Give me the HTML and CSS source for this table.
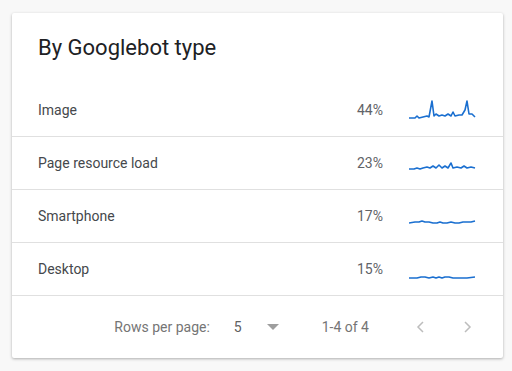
FILE: index.html
```html
<html>

<head>
    <link rel="stylesheet" href="styles.css">
</head>

<body>
    <div class="card">
        <h2 class="title">By Googlebot type</h2>
        <div class="row">
            <span class="label">Image</span>
            <span class="pct">44%</span>
            <svg class="spark" width="68" height="24" viewBox="0 0 68 24">
                <polyline points="0,20 6,20 8,18 10,20 14,19 18,18 20,19 23,3 25,18 27,16 30,18 33,17 36,18 39,16 42,18 44,14 46,18 50,17 53,17 56,12 58,3 60,16 63,16 66,19" />
            </svg>
        </div>
        <div class="row">
            <span class="label">Page resource load</span>
            <span class="pct">23%</span>
            <svg class="spark" width="68" height="24" viewBox="0 0 68 24">
                <polyline points="0,18 5,18 8,17 11,18 14,17 18,16 21,17 24,15 27,17 30,14 33,17 36,15 39,17 42,12 44,17 48,16 52,17 55,15 58,17 62,16 66,17" />
            </svg>
        </div>
        <div class="row">
            <span class="label">Smartphone</span>
            <span class="pct">17%</span>
            <svg class="spark" width="68" height="24" viewBox="0 0 68 24">
                <polyline points="0,19 6,18 10,18 13,17 16,18 20,18 24,19 28,19 31,18 34,19 38,19 42,18 46,19 50,19 54,18 58,18 62,18 66,17" />
            </svg>
        </div>
        <div class="row">
            <span class="label">Desktop</span>
            <span class="pct">15%</span>
            <svg class="spark" width="68" height="24" viewBox="0 0 68 24">
                <polyline points="0,21 8,21 12,20 16,20 20,21 24,20 27,21 30,20 33,21 36,20 40,20 44,21 50,21 58,21 66,20" />
            </svg>
        </div>
        <div class="footer">
            <span class="rows-label">Rows per page:</span>
            <span class="rows-value">5</span>
            <svg class="caret" width="12" height="6" viewBox="0 0 12 6">
                <path d="M0 0 L6 6 L12 0 Z" />
            </svg>
            <span class="range">1-4 of 4</span>
            <svg class="chev" width="24" height="24" viewBox="0 0 24 24">
                <path d="M14 7 L9 12 L14 17" />
            </svg>
            <svg class="chev" width="24" height="24" viewBox="0 0 24 24">
                <path d="M10 7 L15 12 L10 17" />
            </svg>
        </div>
    </div>
</body>

</html>
```

FILE: styles.css
```css
* {
    margin: 0;
}

body {
    background-color: #f8f8f8;
    padding: 13px 0 0 12px;
    font-family: Roboto, "Noto Sans", sans-serif;
}

.card {
    width: 491px;
    background-color: white;
    border-radius: 2px;
    box-shadow: 0 1px 3px rgba(0, 0, 0, 0.3);
}

.title {
    font-size: 22px;
    font-weight: 400;
    color: #202124;
    line-height: 28px;
    padding: 21px 26px 22px;
}

.row {
    display: flex;
    align-items: center;
    height: 53px;
    padding: 0 26px;
    border-bottom: 1px solid #e0e0e0;
    box-sizing: border-box;
    font-size: 14px;
}

.label {
    flex: 1;
    color: #45484c;
}

.pct {
    color: #5f6368;
    margin-right: 26px;
}

.spark polyline {
    fill: none;
    stroke: #1a6fd0;
    stroke-width: 1.6;
    stroke-linejoin: round;
}

.footer {
    display: flex;
    align-items: center;
    justify-content: flex-end;
    height: 62px;
    padding-right: 24px;
    font-size: 14px;
    color: #757575;
}

.rows-value {
    margin-left: 24px;
    color: #616161;
}

.caret {
    margin-left: 25px;
    fill: #9e9e9e;
}

.range {
    margin-left: 43px;
}

.chev {
    margin-left: 40px;
}

.chev + .chev {
    margin-left: 22px;
}

.chev path {
    fill: none;
    stroke: #bdbdbd;
    stroke-width: 1.5;
}
```
